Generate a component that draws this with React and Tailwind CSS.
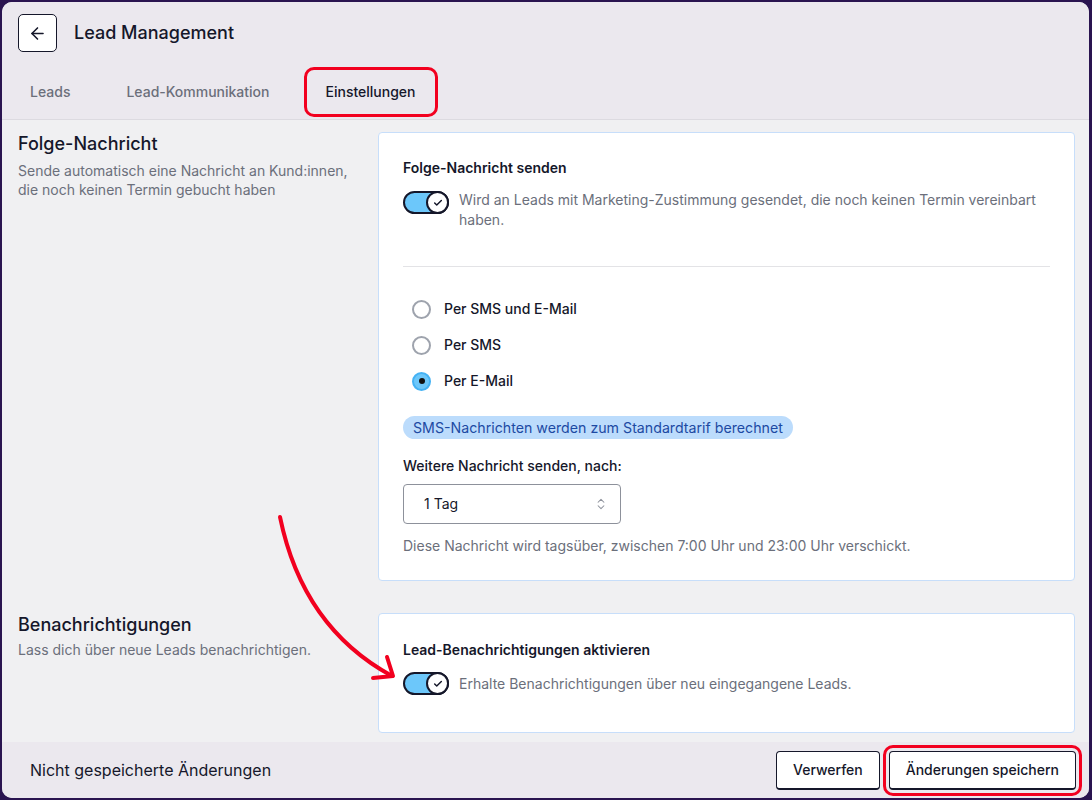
import React, { useState } from "react";
import { ArrowLeft, ChevronsUpDown, Check } from "lucide-react";

const Toggle = ({ on = true }) => (
  <div className="relative w-[46px] h-[23px] shrink-0 rounded-full border-2 border-[#15172a] bg-[#6cc7fa]">
    <div className="absolute right-[-2px] top-[-2px] w-[23px] h-[23px] rounded-full border-2 border-[#15172a] bg-white flex items-center justify-center">
      {on && <Check size={10} strokeWidth={3.5} className="text-[#15172a]" />}
    </div>
  </div>
);

const Radio = ({ checked, label, onClick }) => (
  <button onClick={onClick} className="flex items-center h-6 gap-[13px] pl-[9px] text-left">
    {checked ? (
      <span className="w-[19px] h-[19px] rounded-full border-2 border-[#44b2f4] bg-[#6cc7fa] flex items-center justify-center">
        <span className="w-[6px] h-[6px] rounded-full bg-[#111]" />
      </span>
    ) : (
      <span className="w-[19px] h-[19px] rounded-full border-2 border-[#9ea3ad] bg-white" />
    )}
    <span className="text-sm font-medium text-[#15172a]">{label}</span>
  </button>
);

export default function App() {
  const [kanal, setKanal] = useState("email");

  return (
    <div className="h-[800px] w-full bg-[#2a1450] p-[2px] pr-[3px] font-['Inter',sans-serif]">
      <div className="relative h-full rounded-[10px] overflow-hidden bg-[#f0f0f2] flex flex-col">
        {/* Header */}
        <div className="bg-[#ebe8ee] border-b border-[#dcdae0] pt-3 pb-[2px]">
          <div className="flex items-center gap-[17px] pl-4">
            <button className="w-[39px] h-[38px] rounded-[5px] border border-[#15172a] bg-white flex items-center justify-center">
              <ArrowLeft size={19} strokeWidth={2} className="text-[#15172a]" />
            </button>
            <h1 className="text-lg font-medium text-[#15172a]">Lead Management</h1>
          </div>
          <div className="flex gap-3 pl-[6px] mt-[15px]">
            <div className="h-[50px] px-[22px] flex items-center text-sm font-medium text-[#6b6f7b]">Leads</div>
            <div className="h-[50px] px-[22px] flex items-center text-sm font-medium text-[#6b6f7b]">Lead-Kommunikation</div>
            <div className="h-[50px] px-[19px] flex items-center text-sm font-medium text-[#15172a] border-[3px] border-[#f2001f] rounded-[10px]">
              Einstellungen
            </div>
          </div>
        </div>

        {/* Content */}
        <div className="flex-1 overflow-hidden pt-3 pl-4 pr-[14px] flex flex-col gap-8">
          <div className="grid grid-cols-[344px_1fr] gap-4">
            <div>
              <h2 className="text-lg font-medium text-[#15172a] leading-[24px]">Folge-Nachricht</h2>
              <p className="text-sm text-[#6b6f7b] leading-[19px] mt-[5px]">
                Sende automatisch eine Nachricht an Kund:innen, die noch keinen Termin gebucht haben
              </p>
            </div>
            <div className="bg-white border border-[#c7defa] rounded-[4px] pt-[25px] px-[24px] pb-[24px]">
              <div className="text-sm font-semibold text-[#15172a] leading-5">Folge-Nachricht senden</div>
              <div className="flex gap-[10px] mt-[12px]">
                <div className="pt-[1px]">
                  <Toggle />
                </div>
                <p className="text-sm text-[#6b6f7b] leading-5">
                  Wird an Leads mit Marketing-Zustimmung gesendet, die noch keinen Termin vereinbart haben.
                </p>
              </div>
              <div className="h-px bg-[#e3e3e6] mt-9" />
              <div className="flex flex-col gap-3 mt-[30px]">
                <Radio label="Per SMS und E-Mail" checked={kanal === "both"} onClick={() => setKanal("both")} />
                <Radio label="Per SMS" checked={kanal === "sms"} onClick={() => setKanal("sms")} />
                <Radio label="Per E-Mail" checked={kanal === "email"} onClick={() => setKanal("email")} />
              </div>
              <div className="mt-[22px]">
                <span className="inline-flex items-center h-[23px] px-[10px] rounded-full bg-[#bcdcfc] text-[14.2px] text-[#1d4aa3]">
                  SMS-Nachrichten werden zum Standardtarif berechnet
                </span>
              </div>
              <div className="text-sm font-medium text-[#15172a] leading-5 mt-[17px]">Weitere Nachricht senden, nach:</div>
              <div className="mt-2 w-[218px] h-[40px] rounded-[4px] border border-[#8d919b] flex items-center justify-between pl-5 pr-[12px]">
                <span className="text-sm text-[#15172a]">1 Tag</span>
                <ChevronsUpDown size={14} strokeWidth={1.75} className="text-[#8d919b]" />
              </div>
              <p className="text-sm text-[#6b6f7b] leading-5 mt-[12px]">
                Diese Nachricht wird tagsüber, zwischen 7:00 Uhr und 23:00 Uhr verschickt.
              </p>
            </div>
          </div>

          <div className="grid grid-cols-[344px_1fr] gap-4">
            <div>
              <h2 className="text-lg font-medium text-[#15172a] leading-[24px]">Benachrichtigungen</h2>
              <p className="text-sm text-[#6b6f7b] leading-[19px] mt-[3px]">Lass dich über neue Leads benachrichtigen.</p>
            </div>
            <div className="bg-white border border-[#c7defa] rounded-[4px] pt-[26px] px-[24px] pb-[37px]">
              <div className="text-sm font-semibold text-[#15172a] leading-5">Lead-Benachrichtigungen aktivieren</div>
              <div className="flex items-center gap-[10px] mt-[12px]">
                <Toggle />
                <p className="text-sm text-[#6b6f7b] leading-5">Erhalte Benachrichtigungen über neu eingegangene Leads.</p>
              </div>
            </div>
          </div>
        </div>

        {/* Footer */}
        <div className="h-[56px] shrink-0 bg-[#ebe8ee] flex items-center justify-between pl-7 pr-[7px]">
          <span className="text-base text-[#15172a]">Nicht gespeicherte Änderungen</span>
          <div className="flex items-center gap-[3px]">
            <button className="h-[39px] px-4 bg-white rounded-[4px] border border-[#15172a] border-b-2 text-sm font-medium text-[#15172a]">
              Verwerfen
            </button>
            <span className="border-[3px] border-[#f2001f] rounded-[10px] p-[3px] flex">
              <button className="h-[39px] px-4 bg-white rounded-[4px] border border-[#15172a] border-b-2 text-sm font-medium text-[#15172a]">
                Änderungen speichern
              </button>
            </span>
          </div>
        </div>

        {/* Annotation arrow */}
        <svg className="absolute left-0 top-0 pointer-events-none" width="1092" height="800" viewBox="2 2 1092 800">
          <path d="M280 517 C 296 595, 335 645, 392 676" fill="none" stroke="#f2001f" strokeWidth="4" strokeLinecap="round" />
          <path d="M387 657 L393 676 L373 678" fill="none" stroke="#f2001f" strokeWidth="4" strokeLinecap="round" strokeLinejoin="round" />
        </svg>
      </div>
    </div>
  );
}
